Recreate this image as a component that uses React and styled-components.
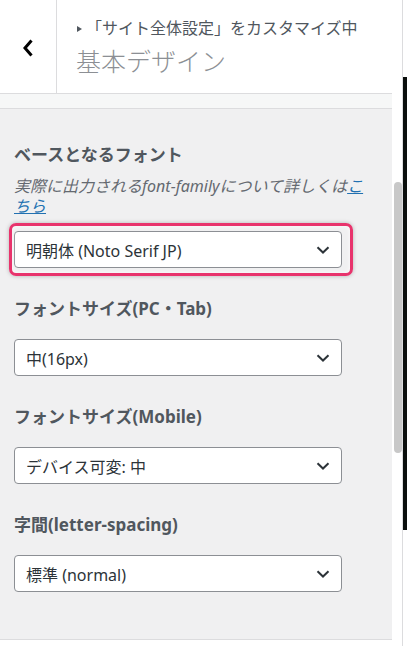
import React from "react";
import styled, { createGlobalStyle } from "styled-components";

const Global = createGlobalStyle`
  html, body { margin: 0; padding: 0; overflow: hidden; }
  body {
    font-family: "Noto Sans", "Noto Sans CJK JP", sans-serif;
    background: #fff;
  }
`;

const Page = styled.div`
  display: flex;
  width: 407px;
  height: 646px;
  overflow: hidden;
`;

const Sidebar = styled.div`
  display: flex;
  width: 402px;
  flex: none;
  border-right: 1px solid #dcdcde;
`;

const Column = styled.div`
  width: 392px;
  display: flex;
  flex-direction: column;
`;

const Header = styled.div`
  display: flex;
  height: 93px;
  background: #fff;
  border-bottom: 1px solid #dcdcde;
  flex: none;
`;

const BackButton = styled.div`
  width: 57px;
  border-right: 1px solid #dcdcde;
  display: flex;
  align-items: center;
  justify-content: center;
  padding-top: 2px;
  box-sizing: border-box;
`;

const TitleBlock = styled.div`
  display: flex;
  flex-direction: column;
  padding: 18px 0 0 19px;
`;

const Action = styled.div`
  display: flex;
  align-items: center;
  font-size: 16px;
  line-height: 20px;
  color: #50575e;
`;

const Triangle = styled.span`
  display: inline-block;
  width: 0;
  height: 0;
  border-left: 5px solid #50575e;
  border-top: 3px solid transparent;
  border-bottom: 3px solid transparent;
  margin: 1px 4px 0 1px;
`;

const Title = styled.div`
  font-size: 25px;
  line-height: 30px;
  font-weight: 300;
  color: #8c8f94;
  margin-top: 8px;
`;

const Strip = styled.div`
  height: 14px;
  background: #f6f7f7;
  border-bottom: 1px solid #dcdcde;
  flex: none;
`;

const Content = styled.div`
  background: #f0f0f1;
  padding: 34px 14px 47px;
  border-bottom: 1px solid #dcdcde;
  flex: none;
`;

const SectionTitle = styled.div`
  font-size: 17px;
  line-height: 24px;
  font-weight: 700;
  color: #50575e;
`;

const Description = styled.div`
  font-size: 16px;
  line-height: 20px;
  font-style: italic;
  color: #646970;
  margin: 9px 0 15px;
  a {
    color: #2271b1;
    text-decoration: underline;
  }
`;

const Control = styled.div`
  margin-bottom: ${(p) => (p.$last ? 0 : 29)}px;
`;

const Label = styled.div`
  font-size: 17px;
  line-height: 24px;
  font-weight: 700;
  color: #50575e;
  margin-bottom: 18px;
`;

const HighlightWrap = styled.div`
  position: relative;
  width: fit-content;
`;

const Highlight = styled.div`
  position: absolute;
  left: -5px;
  right: -11px;
  top: -8px;
  bottom: -8px;
  border: 3.5px solid #e8336c;
  border-radius: 7px;
  box-shadow: 0 0 4px rgba(0, 0, 0, 0.25), inset 0 0 4px rgba(255, 255, 255, 0.9);
  pointer-events: none;
`;

const Select = styled.div`
  width: 328px;
  height: 37px;
  box-sizing: border-box;
  border: 1px solid #8c8f94;
  border-radius: 4px;
  background: #fff;
  display: flex;
  align-items: center;
  justify-content: space-between;
  padding: 0 11px 0 11px;
  font-size: 16px;
  color: #2c3338;
`;

const Preview = styled.div`
  flex: 1;
  display: flex;
  flex-direction: column;
`;

const PreviewTop = styled.div`
  height: 77px;
  background: #fff;
`;

const PreviewDark = styled.div`
  height: 453px;
  background: #0b0f0d;
`;

const Track = styled.div`
  width: 10px;
  background: #fff;
  padding-top: ${(p) => p.$top}px;
  box-sizing: border-box;
  display: flex;
  justify-content: center;
`;

const Thumb = styled.div`
  width: 8px;
  height: ${(p) => p.$h}px;
  border-radius: 4px;
  background: #c8c8c8;
  margin-left: 1px;
`;

const Chevron = () => (
  <svg width="14" height="8" viewBox="0 0 14 8" fill="none">
    <path d="M1.5 1.2 L7 6.5 L12.5 1.2" stroke="#2c3338" strokeWidth="2" strokeLinejoin="miter" />
  </svg>
);

const SelectBox = ({ children }) => (
  <Select>
    <span>{children}</span>
    <Chevron />
  </Select>
);

const controls = [
  { label: "フォントサイズ(PC・Tab)", value: "中(16px)" },
  { label: "フォントサイズ(Mobile)", value: "デバイス可変: 中" },
  { label: "字間(letter-spacing)", value: "標準 (normal)" },
];

export default function App() {
  return (
    <>
      <Global />
      <Page>
        <Sidebar>
          <Column>
            <Header>
              <BackButton>
                <svg width="12" height="18" viewBox="0 0 12 18" fill="none">
                  <path d="M9.5 1.5 L3 9 L9.5 16.5" stroke="#000" strokeWidth="3" />
                </svg>
              </BackButton>
              <TitleBlock>
                <Action>
                  <Triangle />
                  「サイト全体設定」をカスタマイズ中
                </Action>
                <Title>基本デザイン</Title>
              </TitleBlock>
            </Header>
            <Strip />
            <Content>
              <Control>
                <SectionTitle>ベースとなるフォント</SectionTitle>
                <Description>
                  実際に出力されるfont-familyについて詳しくは<a href="#">こちら</a>
                </Description>
                <HighlightWrap>
                  <Highlight />
                  <SelectBox>明朝体 (Noto Serif JP)</SelectBox>
                </HighlightWrap>
              </Control>
              {controls.map((c, i) => (
                <Control key={c.label} $last={i === controls.length - 1}>
                  <Label>{c.label}</Label>
                  <SelectBox>{c.value}</SelectBox>
                </Control>
              ))}
            </Content>
          </Column>
          <Track $top={182}>
            <Thumb $h={271} />
          </Track>
        </Sidebar>
        <Preview>
          <PreviewTop />
          <PreviewDark />
        </Preview>
      </Page>
    </>
  );
}
